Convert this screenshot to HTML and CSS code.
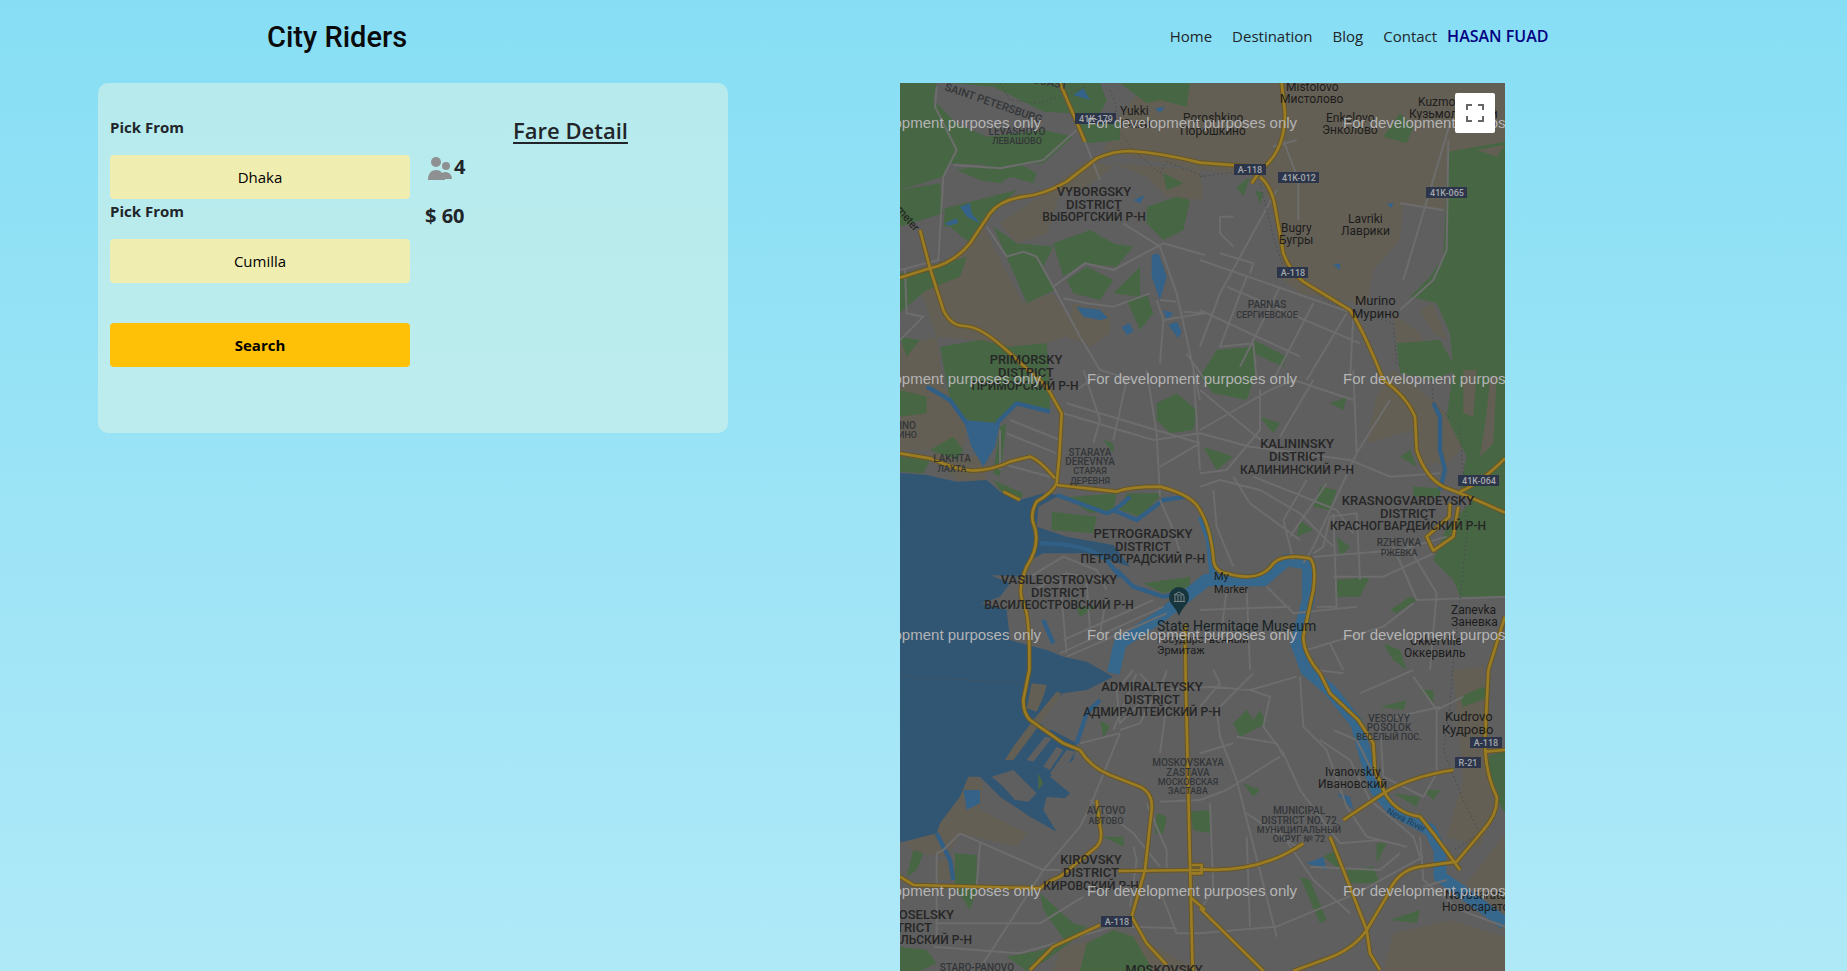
FILE: index.html
```
<!DOCTYPE html>
<html lang="en">
<head>
<meta charset="utf-8">
<title>City Riders</title>
<link rel="stylesheet" href="styles.css">
</head>
<body>
<header class="site-header">
  <a class="brand" href="#">City Riders</a>
  <nav class="site-nav">
    <a href="#">Home</a>
    <a href="#">Destination</a>
    <a href="#">Blog</a>
    <a href="#">Contact</a>
    <a class="user" href="#">HASAN FUAD</a>
  </nav>
</header>

<main class="content">
  <section class="card">
    <form class="trip-form">
      <label for="from">Pick From</label>
      <input id="from" type="text" value="Dhaka">
      <label for="to">Pick From</label>
      <input id="to" type="text" value="Cumilla">
      <button class="search" type="button">Search</button>
    </form>
    <div class="fare">
      <h1>Fare Detail</h1>
      <p class="riders">
        <svg class="people" viewBox="0 0 26 24" aria-hidden="true">
          <circle cx="9" cy="5" r="5"/><circle cx="19" cy="9" r="4"/>
          <path d="M1 23C1 17 4 13 9 13c3 0 5 1 6 3 5-3 10 1 10 6h-7v1z"/>
        </svg>
        <span>4</span>
      </p>
      <p class="price">$ 60</p>
    </div>
  </section>

  <section class="map" aria-label="Map">
    <svg class="map-canvas" viewBox="0 0 605 888" preserveAspectRatio="xMinYMin slice">
      <defs>
        <g id="roads">
          <path d="M480 9L555 185M0 593L90 565Q160 550 210 490L270 400Q300 360 370 350 430 345 500 305L590 235Q640 213 690 213 790 220 900 248L1090 262M1145 9L1155 100Q1155 210 1090 262 1060 300 1055 310M1080 290Q1115 320 1125 380L1150 520Q1170 575 1210 605L1350 690Q1390 750 1450 900 1520 950 1545 1010L1550 1110Q1575 1190 1630 1220 1710 1250 1815 1298M1680 1235Q1740 1210 1815 1135"/>
          <path d="M60 450L90 565 130 690Q150 735 190 738 240 735 330 820L440 920 485 1000 478 1130 470 1210Q460 1235 410 1265 390 1300 400 1330 425 1390 380 1460 350 1530 370 1570 390 1600 388 1770L370 1860Q370 1900 390 1920L490 1990 540 2010Q570 2060 630 2085L720 2120Q760 2140 755 2190L735 2370 695 2510 740 2590 800 2655"/>
          <path d="M0 1120L90 1135Q170 1170 220 1172 280 1170 330 1145L390 1130Q420 1140 465 1195M470 1215L650 1235Q690 1220 780 1220 860 1240 890 1275 930 1330 940 1430 940 1475 980 1480 1080 1510 1120 1450 1150 1420 1230 1435 1250 1455 1240 1530L1210 1670Q1210 1720 1260 1780L1290 1840 1375 1920 1420 1990 1425 2070 1455 2140Q1490 2200 1560 2210L1600 2260 1680 2370"/>
          <path d="M1330 2220L1450 2140Q1530 2090 1660 2070M1765 1770L1755 1980Q1755 2080 1790 2150 1795 2200 1750 2250L1670 2345 1560 2360Q1490 2370 1460 2450L1400 2550Q1360 2610 1270 2640L1180 2673M1290 2270L1330 2370 1400 2550 1410 2620 1440 2670M900 2368Q1080 2380 1210 2290M900 2485L1090 2673M1755 2015L1815 2010M1815 1610L1765 1770"/>
          <path d="M855 1630L857 1800 870 2350 878 2673M655 2373L900 2370M0 2390L40 2415 420 2425Q450 2400 480 2390L590 2300Q610 2280 600 2240L590 2160M390 2670L460 2600 600 2535M875 2455L915 2490M875 2355H905V2380H875M1650 1270L1648 1310 1580 1370 1600 1412 1660 1370 1675 1280M310 1235L360 1260"/>
        </g>
      </defs>
      <rect class="land" width="605" height="888"/>
      <g transform="translate(0 -3) scale(.33333)">
        <g class="sand">
          <path d="M740 9H1815V200L1650 220 1640 300 1635 390 1510 370 1500 480 1420 570 1400 680 1330 660 1200 640 1150 600 1130 420 1080 290 900 270 740 240 610 210 640 130z"/>
          <path d="M60 620L200 500 250 440 300 540 370 670 460 640 500 700 520 760 440 790 330 800 240 780 110 770z"/>
          <path d="M300 430L420 350 560 240 640 260 560 320 480 340 440 460 350 490zM640 250L900 270 910 360 800 350 740 290zM520 670L630 700 630 760 570 800 500 770z"/>
          <path d="M0 800L110 770 130 920 160 960 200 1040 190 1100 90 1110 0 1110zM90 1120L260 1130 255 1210 170 1200z"/>
          <path d="M1480 870L1560 930 1650 1010 1690 1100 1640 1150 1560 1150 1540 1050 1400 1090 1430 950zM1480 700L1560 760 1600 860 1500 870z"/>
          <path d="M1660 1770L1750 1760 1760 2010 1800 2160 1740 2300 1640 2270 1690 2100zM1740 2360L1815 2260V2560L1700 2410zM1480 2560L1650 2520 1815 2570V2673H1450z"/>
          <path d="M120 2230L210 2080 250 2110 240 2190 380 2260 350 2300 180 2260 140 2330 40 2320 20 2285 100 2260zM480 2600L690 2560 900 2673H460zM105 2340H158V2400H110z"/>
          <path d="M500 1385L640 1400 680 1450 540 1410z"/>
        </g>
        <g class="green">
          <path d="M0 9H110L100 60 170 130 260 170 430 150 520 170 430 250 290 255 150 250 130 290 0 330z"/>
          <path d="M150 9H470L510 100 430 95 280 20zM480 9H600L620 60 600 100 660 130 660 180 560 190zM660 9H870L860 80 780 60 740 70z"/>
          <path d="M0 330L120 310 130 400 0 440zM170 270L340 240 410 280 400 310 330 290 300 310 240 300zM135 385L350 330 260 420 210 490 150 440 130 440z"/>
          <path d="M280 440L350 490 460 500 430 560 320 530zM320 530L410 530 465 630 380 670zM460 490L570 450 640 490 700 500 650 560 550 550 490 590zM500 600L560 560 640 600 600 660 520 640zM640 640L720 560 720 650zM680 660L740 640 760 700 720 750z"/>
          <path d="M740 380L830 350 870 360 850 450 790 480 740 430zM790 280L850 310 800 330z"/>
          <path d="M0 580L70 570 200 530 180 590 80 630 20 680 0 700zM0 770L60 780 20 830zM120 800L240 780 330 800 440 790 450 920 450 990 345 975 290 1030 200 1020 150 960z"/>
          <path d="M0 930L80 950 80 1000 0 1010zM90 1110L160 1070 190 1110 170 1140zM0 1130L90 1140 70 1180 0 1175zM300 1040L320 1030 300 1190 280 1180z"/>
          <path d="M770 970L830 940 890 990 880 1050 810 1060 770 1020zM280 1200L370 1240 360 1260 300 1230z"/>
          <path d="M730 1510L870 1490 870 1520 790 1540zM530 1580L590 1580 540 1610zM610 1080L640 1090 640 1120z"/>
          <path d="M1645 215L1815 185V1550H1680L1660 1500 1600 1440 1640 1340 1720 1260 1680 1220 1700 1130 1640 1010 1660 870 1650 760 1610 670 1530 650 1590 590 1630 530z"/>
          <path d="M1490 790L1620 780 1670 870 1600 900 1500 880zM1450 170L1500 100 1540 140 1520 190zM1060 780L1160 830 1150 860 1060 820zM950 810L1060 800 1070 870 1040 960 940 940 900 890zM1010 320L1050 290 1030 350zM1065 330L1090 340 1080 370z"/>
          <path d="M910 1100L1000 1130 950 1170zM1260 1220L1310 1230 1290 1290 1240 1280zM1080 1010L1140 1030 1120 1060zM1500 1130L1530 1110 1550 1160zM1200 1320L1240 1350 1190 1370zM1310 1370L1350 1400 1320 1430zM1310 1500L1410 1490 1380 1550 1310 1550zM1470 1590L1530 1550 1550 1560 1490 1600zM1340 950L1290 970 1330 990zM1540 1220L1620 1225 1620 1250 1540 1250z"/>
          <path d="M1450 1690L1500 1710 1520 1770 1480 1740zM1000 1930L1040 1890 1060 1920 1080 1890 1100 1930 1060 1950 1020 1970zM1440 1880L1520 1860 1510 1890zM1680 1850L1750 1820 1770 1850 1690 1880zM1560 1830L1600 1830 1600 1870z"/>
          <path d="M600 1920L630 1940 610 1970zM165 2320L230 2325 230 2430 210 2490 165 2420zM420 2440L520 2530 560 2540 500 2590 430 2490zM610 2270L670 2270 670 2300zM770 2200L800 2210 790 2260 765 2260zM870 2195L930 2190 930 2260 880 2250z"/>
          <path d="M320 2630L430 2610 560 2550 440 2640 380 2673zM640 2550L700 2570 760 2673H540L560 2590zM0 2600L80 2610 110 2650 60 2673H0zM40 2310L70 2320 50 2370 20 2390z"/>
          <path d="M1340 2370L1420 2360 1440 2410 1350 2410zM1430 2290L1460 2290 1430 2350zM1200 2390L1230 2400 1280 2520 1260 2530zM1270 2330L1310 2310 1320 2370zM1480 2140L1560 2150 1550 2180zM1570 2130L1620 2130 1600 2160zM1760 2030L1815 2010V2200L1790 2160zM1470 2520L1560 2490 1550 2530zM1030 2110L1080 2130 1060 2150z"/>
        </g>
        <g class="sand">
          <path d="M1690 870L1730 870 1720 1010 1690 1000zM1770 890L1790 890 1780 1090 1740 1130 1760 1000zM1730 210L1815 195 1790 230zM1560 690L1600 670 1640 780 1600 760z"/>
        </g>
        <path class="sea" d="M0 1178L80 1185 170 1205 260 1200 300 1235 360 1260 430 1240 480 1245 415 1280 410 1340 500 1370 640 1395 690 1460 560 1420 430 1420 390 1440 370 1490 270 1485 330 1510 300 1550 245 1570 320 1590 330 1680 440 1710 490 1730 560 1745 640 1790 560 1830 490 1840 400 1920 530 1990 520 2040 450 2090 510 2140 495 2155 440 2150 430 2190 470 2255 390 2210 300 2150 240 2090 205 2090 180 2150 120 2230 110 2260 10 2285 0 2285z"/>
        <g class="land">
          <path d="M275 2090L340 2070 410 2140 385 2165 345 2160 310 2120zM500 2010L525 2015 500 2060 460 2090 450 2080zM470 2000L490 2010 450 2070 430 2060zM435 1970L455 1975 400 2045 380 2040zM520 1860L560 1850 440 1960 420 1945z"/>
        </g>
        <g class="sand">
          <path d="M395 1810L440 1815 430 1850 410 1895 380 1885zM470 1835L485 1840 400 1960 340 2040 315 2040 340 2000 400 1920z"/>
        </g>
        <g class="green">
          <path d="M500 1252L650 1240 640 1290 570 1300zM680 1240L790 1240 720 1310 660 1290zM455 1295L590 1310 580 1360 455 1350zM415 2080L430 2110 415 2130z"/>
        </g>
        <g class="river">
          <path d="M190 1020L300 1030 285 1100 250 1160 215 1100zM530 680L600 690 625 715 600 720 550 710zM755 525L775 520 800 590 780 660 755 590zM665 740L690 730 700 755 680 765zM805 735L830 725 845 755 835 775zM790 690L820 700 800 720z"/>
          <path d="M180 380L210 370 215 400 240 430 200 410zM135 430L170 415 175 430 145 437zM520 45L550 25 570 60zM700 360L735 345 720 370zM765 85L795 80 780 100zM1460 370L1480 370 1475 385zM1300 555L1320 550 1320 570zM1310 2140L1350 2150 1360 2190zM1220 2350L1270 2330 1280 2370z"/>
          <path d="M190 2130L240 2130 240 2170 200 2190z"/>
        </g>
        <g class="channel">
          <path d="M470 1245Q540 1270 620 1300 650 1290 690 1250M640 1290L710 1320 790 1260 860 1250M650 1470L700 1520 790 1550 890 1530M420 1390Q560 1390 620 1440L660 1490M80 920L150 960 200 1030M290 1030L350 970 450 995M530 1990L560 1900 600 1860M160 2400L150 2340 110 2260M430 1620L460 1690"/>
          <path d="M1600 970L1620 1010 1620 1110 1635 1170 1620 1230"/>
        </g>
        <path class="neva-branch" d="M905 1310L930 1380 940 1490"/>
        <path class="neva" d="M640 1780L660 1690 780 1610 870 1540 920 1500 1000 1500 1090 1500 1160 1440 1225 1450 1225 1560 1190 1690 1220 1770 1290 1830 1370 1930 1400 2040 1430 2130 1480 2190 1590 2250 1620 2310 1620 2390 1720 2460 1815 2530"/>
        <g class="streets">
          <path d="M110 20L105 80 170 210 130 290 115 540 0 570M160 255L300 265 430 240 530 150M555 185L600 300M260 440L320 530 370 515 410 530 460 620 540 770 600 870 700 900M460 620L555 550 640 570 790 490 915 525M670 430L780 500 830 640 870 820 900 960M490 655L560 670 640 680 750 640M780 660L830 665M770 660L790 720 780 850M15 570L20 700 70 710 0 780M850 695L915 700M860 820L915 900M790 720L915 700"/>
          <path d="M1130 330L960 640 900 800M1000 410L960 410 960 460 1000 500M900 540L1360 700M960 520L1060 550 1050 580M1040 590L960 800 1060 790 1070 900M1140 620L1020 860M1240 670L1120 900M1340 700L1220 900M1360 710L1350 900M900 690L1200 830M980 620L1380 790M1120 200L1190 180M1150 180L1195 300 1195 420M1645 180L1640 510 1600 600 1500 690M1650 130L1510 600M1500 370L1630 390"/>
          <path d="M500 970L900 1090M490 1000L760 1080 900 1060M330 1020L480 1080M320 1060L470 1120M550 870L600 1020 580 1090M680 900L640 1080M740 870L770 1060 780 1250M530 930L600 880M880 870L900 1170M300 1150L450 1190M300 1170L300 1050M780 1160L900 1090M780 1260L820 1350 850 1450M390 1490L490 1430 590 1470 620 1530M400 1530L500 1480 600 1500M480 1500L500 1720M560 1510L570 1650M620 1550L600 1660M490 1680L760 1560M480 1720L790 1580M500 1730L800 1600"/>
          <path d="M900 930L1070 1070 1150 1130M900 1050L1110 930 1180 900 1360 960M900 1060L1050 1100 1350 1140 1470 1190 1620 1180M1080 930L1080 1050 980 1170 900 1180M1240 900L1140 1070M1360 870L1370 1120M1470 960L1370 1120 1240 1400 1210 1450M1060 1190L1310 1290 1360 1360M900 1220L960 1200 1080 1230 1200 1300 1300 1400M940 1230L950 1340 1000 1460M1000 1190L1050 1270 1200 1380M1220 1200L1150 1320 1180 1440M1280 1210L1170 1370M1370 1300L1290 1310 1270 1400 1240 1420M1300 1300L1310 1580 1250 1580M1370 1300L1380 1500M1240 1430L1500 1410 1640 1370M1480 1400L1550 1560 1815 1550M1520 1390L1610 1540 1590 1770M1300 1490L1450 1490 1600 1420M1100 1520L1180 1600 1370 1580M900 1590L1170 1580M980 1530L960 1690M1040 1530L1050 1770M1220 1710L1450 1640 1540 1570M1290 1690L1330 1770"/>
          <path d="M700 1770L650 1830 660 1930 740 1850M720 1780L800 1870 780 2020M640 1950L710 1780M660 1950L720 1930 800 1780M800 1770L780 1830 940 1820 1050 1830 1190 1790M940 1770L960 1810 900 1880M1060 1780L950 1890 960 1970 1010 2100 1130 2570M1050 1830L1110 1850 1090 1940 1150 2020 1200 2130 1320 2290 1440 2280M1200 1790L1210 1940 1280 2010 1340 2180 1400 2270 1520 2300M1260 1980L1350 2040 1410 2160 1540 2270 1560 2330M1300 1950L1370 1980 1430 2100M1010 1970L1130 1990 1150 2030M1140 2030L980 2130 900 2160M900 2020L1000 1990M1250 1770L1330 1780M1380 1840L1540 1770M1540 1790L1610 1890 1610 2080 1570 2150 1450 2090 1440 1930M1450 1920L1620 1880M1610 1890L1690 1850"/>
          <path d="M180 2260L430 2370 480 2370M240 2290L230 2420M180 2260L130 2310 110 2320 110 2580M540 2240L430 2370 250 2650M660 1960L570 2180 540 2240M660 1960L540 1990M740 2170L800 2310 800 2370M570 2160L700 2260 780 2360M780 2165L900 2160M700 2300L710 2340 690 2480M110 2530L420 2530 550 2450M100 2600L360 2620 640 2540M780 2430L830 2560 900 2560M690 2540L830 2545M900 2560L1130 2540 1370 2440 1570 2330M930 2170L940 2430 900 2490M1130 2240L1240 2400 1350 2500M1190 2300L1040 2200M1230 2360L1440 2370 1500 2320M1040 2270L1050 2540M1560 2270L1570 2400 1680 2490 1815 2540M1570 2420L1640 2400"/>
        </g>
        <path class="rail" d="M630 30L650 80 640 130 700 210 780 280 800 245 915 290M900 290L1050 270M1080 310L1120 470 1150 560 1230 620 1290 670 1390 700 1480 730 1490 850 1550 890M1595 900L1600 970 1680 1040 1690 1200 1700 1360 1680 1560 1660 1740 1650 1880 1630 2010 1690 2160 1740 2260 1660 2310M0 1790L200 1800 370 1810M300 10L330 60 420 70 560 20"/>
        <use href="#roads" class="road-edge"/>
        <use href="#roads" class="road-fill"/>
      </g>

      <g class="shields">
        <rect x="175" y="30" width="41" height="11"/><rect x="334" y="81" width="32" height="11"/><rect x="378" y="89" width="41" height="11"/><rect x="526" y="104" width="41" height="11"/><rect x="377" y="184" width="31" height="11"/><rect x="558" y="392" width="41" height="11"/><rect x="570" y="654" width="32" height="11"/><rect x="555" y="674" width="26" height="11"/><rect x="201" y="833" width="31" height="11"/>
      </g>
      <g class="shield-text">
        <text x="196" y="39">41K-179</text><text x="350" y="90">A-118</text><text x="399" y="98">41K-012</text><text x="547" y="113">41K-065</text><text x="393" y="193">A-118</text><text x="579" y="401">41K-064</text><text x="586" y="663">A-118</text><text x="568" y="683">R-21</text><text x="217" y="842">A-118</text>
      </g>

      <g class="district">
        <text x="194" y="113">VYBORGSKY</text><text x="194" y="126">DISTRICT</text>
        <text x="126" y="281">PRIMORSKY</text><text x="126" y="294">DISTRICT</text>
        <text x="397" y="365">KALININSKY</text><text x="397" y="378">DISTRICT</text>
        <text x="508" y="422">KRASNOGVARDEYSKY</text><text x="508" y="435">DISTRICT</text>
        <text x="243" y="455">PETROGRADSKY</text><text x="243" y="468">DISTRICT</text>
        <text x="159" y="501">VASILEOSTROVSKY</text><text x="159" y="514">DISTRICT</text>
        <text x="252" y="608">ADMIRALTEYSKY</text><text x="252" y="621">DISTRICT</text>
        <text x="191" y="781">KIROVSKY</text><text x="191" y="794">DISTRICT</text>
        <text x="264" y="891">MOSKOVSKY</text>
        <g class="at-end"><text x="54" y="836">KRASNOSELSKY</text><text x="32" y="849">DISTRICT</text></g>
      </g>
      <g class="district local">
        <text x="194" y="138">ВЫБОРГСКИЙ Р-Н</text>
        <text x="125" y="307">ПРИМОРСКИЙ Р-Н</text>
        <text x="397" y="391">КАЛИНИНСКИЙ Р-Н</text>
        <text x="508" y="447">КРАСНОГВАРДЕЙСКИЙ Р-Н</text>
        <text x="243" y="480">ПЕТРОГРАДСКИЙ Р-Н</text>
        <text x="159" y="526">ВАСИЛЕОСТРОВСКИЙ Р-Н</text>
        <text x="252" y="633">АДМИРАЛТЕЙСКИЙ Р-Н</text>
        <text x="191" y="807">КИРОВСКИЙ Р-Н</text>
        <g class="at-end"><text x="72" y="861">КРАСНОСЕЛЬСКИЙ Р-Н</text></g>
      </g>

      <g class="quarter">
        <text x="117" y="52">LEVASHOVO</text>
        <text x="367" y="225">PARNAS</text>
        <text x="52" y="379">LAKHTA</text>
        <text x="190" y="373">STARAYA</text><text x="190" y="382">DEREVNYA</text>
        <text x="499" y="463">RZHEVKA</text>
        <text x="288" y="683">MOSKOVSKAYA</text><text x="288" y="693">ZASTAVA</text>
        <text x="206" y="731">AVTOVO</text>
        <text x="489" y="639">VESOLYY</text><text x="489" y="648">POSOLOK</text>
        <text x="399" y="731">MUNICIPAL</text><text x="399" y="741">DISTRICT NO. 72</text>
        <text x="77" y="888">STARO-PANOVO</text>
        <g class="at-end"><text x="16" y="346">OLGINO</text></g>
      </g>
      <g class="quarter local">
        <text x="117" y="61">ЛЕВАШОВО</text>
        <text x="367" y="235">СЕРГИЕВСКОЕ</text>
        <text x="52" y="389">ЛАХТА</text>
        <text x="190" y="391">СТАРАЯ</text><text x="190" y="401">ДЕРЕВНЯ</text>
        <text x="499" y="473">РЖЕВКА</text>
        <text x="288" y="702">МОСКОВСКАЯ</text><text x="288" y="711">ЗАСТАВА</text>
        <text x="206" y="741">АВТОВО</text>
        <text x="489" y="657">ВЕСЁЛЫЙ ПОС.</text>
        <text x="399" y="750">МУНИЦИПАЛЬНЫЙ</text><text x="399" y="759">ОКРУГ № 72</text>
        <g class="at-end"><text x="17" y="355">ОЛЬГИНО</text></g>
      </g>
      <g class="road-name">
        <text transform="translate(44 7) rotate(19)">SAINT PETERSBURG</text>
        <text transform="translate(132 0) rotate(10)">COAST</text>
      </g>

      <g class="town">
        <text x="220" y="32">Yukki</text><text x="220" y="45">Юкки</text>
        <text x="283" y="39">Poroshkino</text><text x="280" y="52">Порошкино</text>
        <text x="386" y="8">Mistolovo</text><text x="380" y="20">Мистолово</text>
        <text x="426" y="39">Enkolovo</text><text x="422" y="51">Энколово</text>
        <text x="518" y="23">Kuzmolovsky</text><text x="509" y="35">Кузьмоловский</text>
        <text x="448" y="140">Lavriki</text><text x="441" y="152">Лаврики</text>
        <text x="381" y="149">Bugry</text><text x="379" y="161">Бугры</text>
        <text x="551" y="531">Zanevka</text><text x="551" y="543">Заневка</text>
        <text x="510" y="562">Okkerville</text><text x="504" y="574">Оккервиль</text>
        <text x="425" y="693">Ivanovskiy</text><text x="418" y="705">Ивановский</text>
        <text x="545" y="816">Novosaratovka</text><text x="542" y="828">Новосаратовка</text>
      </g>
      <g class="town small">
        <text x="314" y="497">My</text><text x="314" y="510">Marker</text>
        <text x="257" y="560">Государственный</text><text x="257" y="571">Эрмитаж</text>
        <text transform="translate(-4 127) rotate(50)">meter</text>
      </g>
      <g class="town large">
        <text x="455" y="222">Murino</text><text x="452" y="235">Мурино</text>
        <text x="545" y="638">Kudrovo</text><text x="542" y="651">Кудрово</text>
      </g>
      <text class="museum" x="257" y="548">State Hermitage Museum</text>
      <text class="river-name" transform="translate(486 730) rotate(27)">Neva River</text>

      <path class="pin" d="M279 533C276 524 269 521 269 514a10 10 0 0 1 20 0c0 7-7 10-10 19z"/>
      <path class="pin-mark" d="M274 512l5-3 5 3zM275 513v5M278 513v5M281 513v5M284 513v5M274 518.500h11"/>

      <g class="watermark">
        <text x="-69" y="45">For development purposes only</text><text x="187" y="45">For development purposes only</text><text x="443" y="45">For development purposes only</text>
        <text x="-69" y="301">For development purposes only</text><text x="187" y="301">For development purposes only</text><text x="443" y="301">For development purposes only</text>
        <text x="-69" y="557">For development purposes only</text><text x="187" y="557">For development purposes only</text><text x="443" y="557">For development purposes only</text>
        <text x="-69" y="813">For development purposes only</text><text x="187" y="813">For development purposes only</text><text x="443" y="813">For development purposes only</text>
      </g>
    </svg>
    <button class="fullscreen" type="button" aria-label="Toggle fullscreen view">
      <svg viewBox="0 0 18 18" aria-hidden="true"><path d="M0 0v6h2V2h4V0H2zM16 0h-4v2h4v4h2V0zM16 16h-4v2h6v-6h-2zM2 12H0v6h6v-2H2z"/></svg>
    </button>
  </section>
</main>
</body>
</html>
```

FILE: styles.css
```
* {
  box-sizing: border-box;
}

body {
  display: flex;
  flex-direction: column;
  min-height: 100vh;
  margin: 0;
  color: #212529;
  font-family: "Open Sans", "Noto Sans", sans-serif;
  font-size: 15px;
  line-height: 24px;
  background: linear-gradient(#87def4, #afe9f8) no-repeat;
}

a {
  color: inherit;
  text-decoration: none;
}

.site-header {
  display: flex;
  align-items: center;
  justify-content: space-between;
  height: 83px;
  padding: 0 16% 10px 267px;
}

.brand {
  color: #0a0a0a;
  font: 500 29px/36px Roboto, sans-serif;
}

.site-nav {
  display: flex;
  gap: 20px;
  padding: 0 3px 2px 0;
}

.site-nav .user {
  margin-left: -10px;
  color: #000080;
  font-size: 16px;
  font-weight: 600;
}

.content {
  display: grid;
  flex: 1;
  grid-template-columns: 98fr 630fr 172fr 605fr 342fr;
}

.card {
  display: grid;
  grid-column: 2;
  grid-template-columns: 300px 1fr;
  gap: 15px;
  align-self: start;
  min-height: 350px;
  padding: 32px 12px;
  border-radius: 10px;
  background: rgba(226, 246, 230, 0.5);
}

.trip-form {
  display: flex;
  flex-direction: column;
}

.trip-form label {
  margin-bottom: 16px;
  font-weight: 700;
}

.trip-form input,
.search {
  width: 100%;
  height: 44px;
  padding: 0 12px;
  border: 0;
  border-radius: 4px;
  color: #000;
  font: inherit;
  text-align: center;
}

.trip-form input {
  background: #f0edb0;
}

.search {
  margin-top: 40px;
  background: #ffc107;
  font-weight: 700;
}

.fare h1 {
  margin: 0 0 8px;
  font-size: 22px;
  font-weight: 600;
  line-height: 30px;
  text-align: center;
  text-decoration: underline;
  text-decoration-thickness: 2px;
  text-underline-offset: 3px;
}

.fare p {
  margin: 0 0 23px;
  font-size: 20px;
  font-weight: 700;
  line-height: 24px;
}

.fare .riders {
  display: flex;
  align-items: center;
  gap: 1px;
  padding-left: 2px;
}

.people {
  width: 26px;
  height: 24px;
  margin-top: 4px;
  fill: #8e9092;
}

.map {
  position: relative;
  grid-column: 4;
  overflow: hidden;
  height: calc(100vh - 83px);
  background: #5f5f5f;
}

.map-canvas {
  display: block;
  width: 100%;
  height: 100%;
  font-family: Roboto, sans-serif;
}

.land { fill: #5f5f5f; }
.sand { fill: #645f54; }
.green { fill: #476744; }
.sea { fill: #315674; }
.river { fill: #346288; }

.channel,
.neva,
.neva-branch,
.streets,
.rail,
.road-edge,
.road-fill {
  fill: none;
  stroke-linejoin: round;
}

.channel { stroke: #315f85; stroke-width: 13; }
.neva { stroke: #36678c; stroke-width: 38; }
.neva-branch { stroke: #36678c; stroke-width: 24; }
.streets { stroke: #6d6d6d; stroke-width: 6; }
.rail { stroke: #484b4e; stroke-width: 3; stroke-dasharray: 5 8; }
.road-edge { stroke: #695623; stroke-width: 14; }
.road-fill { stroke: #9a7c25; stroke-width: 8; }

.shields rect { fill: #2c3549; }

.shield-text {
  fill: #a5a8ad;
  font-size: 9px;
  font-weight: 500;
  text-anchor: middle;
}

.district {
  fill: #262626;
  font-size: 13px;
  font-weight: 500;
  text-anchor: middle;
}

.quarter {
  fill: #333639;
  font-size: 10px;
  font-weight: 500;
  text-anchor: middle;
}

.district.local { font-size: 12px; }
.quarter.local { font-size: 9px; }

.road-name {
  fill: #333639;
  font-size: 11px;
  font-weight: 500;
}

.at-end { text-anchor: end; }

.town {
  fill: #1c1c1c;
  font-size: 12px;
}

.town.small { font-size: 11px; }
.town.large { font-size: 13px; }

.museum {
  fill: #172326;
  font-size: 14px;
}

.river-name {
  fill: #1c3e59;
  font-size: 9px;
}

.pin { fill: #17353c; }

.pin-mark {
  fill: none;
  stroke: #778486;
}

.watermark {
  fill: #b4b4b4;
  font-family: "Liberation Sans", Arial, sans-serif;
  font-size: 15px;
}

.fullscreen {
  position: absolute;
  top: 10px;
  right: 10px;
  display: grid;
  place-items: center;
  width: 40px;
  height: 40px;
  padding: 0;
  border: 0;
  border-radius: 2px;
  background: #fff;
}

.fullscreen svg {
  width: 18px;
  height: 18px;
  fill: #666;
}
```
